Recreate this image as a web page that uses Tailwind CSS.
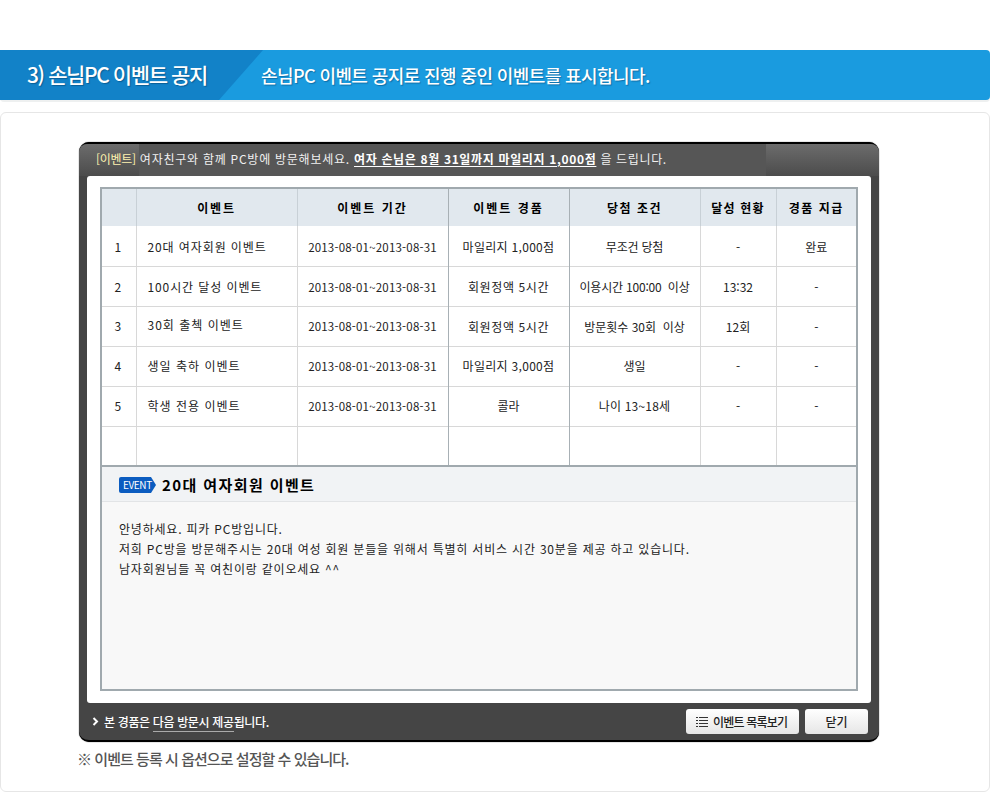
<!DOCTYPE html>
<html lang="ko">

<head>
    <meta charset="UTF-8">
    <title>손님PC 이벤트 공지</title>
    <script src="https://cdn.jsdelivr.net/npm/@tailwindcss/browser@4"></script>
</head>

<body class="bg-white font-['Noto_Sans_CJK_KR','Noto_Sans',sans-serif] antialiased">
    <div class="w-[990px] h-[792px] overflow-hidden pt-[50px]">

        <!-- Title bar -->
        <header class="h-[50px] flex items-center bg-[#1a9bdf] rounded-[4px] shadow-[0_2px_0_#eef0f0] text-white">
            <div class="w-[263px] h-full flex items-center pl-[27px] bg-[#1282c8] [clip-path:polygon(0_0,100%_0,219px_100%,0_100%)]">
                <h1 class="text-[21px] font-medium tracking-[-1.4px] [text-shadow:1px_1px_1px_#0a5f96]">3) 손님PC 이벤트 공지</h1>
            </div>
            <p class="ml-[-2px] text-[18px] font-medium tracking-[-0.6px] [text-shadow:1px_1px_1px_#0f6fa8]">손님PC 이벤트 공지로 진행 중인 이벤트를 표시합니다.</p>
        </header>

        <!-- Panel -->
        <section class="mt-[12px] h-[680px] border border-[#e6e6e6] rounded-[6px] pt-[29px] pl-[78px]">
            <div class="w-[800px] h-[600px] rounded-[10px] border-t-2 border-b-2 border-black bg-[#454545] flex flex-col shadow-[0_0_1px_#000]">

                <!-- Notice -->
                <div class="h-[32px] flex rounded-t-[8px] overflow-hidden bg-gradient-to-b from-[#6c6c6c] to-[#4c4c4c]">
                    <p class="w-[687px] pl-[17px] bg-[linear-gradient(to_right,transparent_60px,#565656_60px)] text-[12px] leading-[30px] text-[#f0f0f0] whitespace-pre"><span class="text-[#fff3b0] tracking-[-0.3px]">[이벤트]</span><span class="tracking-[0.75px]"> 여자친구와 함께 PC방에 방문해보세요. </span><b class="text-white underline underline-offset-2 tracking-[0.65px]">여자 손님은 8월 31일까지 마일리지 1,000점</b><span class="tracking-[0.65px]"> 을 드립니다.</span></p>
                </div>

                <!-- White frame -->
                <div class="mx-[8px] h-[527px] bg-white rounded-[3px] pt-[11px] px-[13px]">
                    <div class="h-[504px] border-2 border-[#a0a9ae] flex flex-col">
                        <table class="w-[754px] table-fixed border-collapse text-[12px] text-[#222] text-center">
                            <colgroup>
                                <col class="w-[34px]">
                                <col class="w-[161px]">
                                <col class="w-[151px]">
                                <col class="w-[121px]">
                                <col class="w-[131px]">
                                <col class="w-[76px]">
                                <col class="w-[80px]">
                            </colgroup>
                            <thead>
                                <tr class="h-[37px] bg-[#e1e8ee] font-bold text-black">
                                    <th class="border-r border-[#c8d0d6]"></th>
                                    <th class="border-r border-[#c8d0d6] tracking-[1.8px]">이벤트</th>
                                    <th class="border-r border-[#a8b0b5] tracking-[2px]">이벤트 기간</th>
                                    <th class="border-r border-[#a8b0b5] tracking-[2px]">이벤트 경품</th>
                                    <th class="border-r border-[#c8d0d6] tracking-[1.5px]">당첨 조건</th>
                                    <th class="border-r border-[#c8d0d6] tracking-[1.2px]">달성 현황</th>
                                    <th class="tracking-[1.5px]">경품 지급</th>
                                </tr>
                            </thead>
                            <tbody>
                                <tr class="h-[40px] border-b border-[#d8d8d8]">
                                    <td class="pt-[2px] border-r border-[#d8d8d8] pr-[2px]">1</td>
                                    <td class="pt-[2px] border-r border-[#d8d8d8] text-left pl-[11px] tracking-[0.9px]">20대 여자회원 이벤트</td>
                                    <td class="pt-[3px] border-r border-[#a8b0b5] text-[11.5px] tracking-[0.2px]">2013-08-01~2013-08-31</td>
                                    <td class="pt-[2px] border-r border-[#a8b0b5] tracking-[0.3px]">마일리지 1,000점</td>
                                    <td class="pt-[2px] border-r border-[#d8d8d8] tracking-[-0.2px]">무조건 당첨</td>
                                    <td class="pt-[2px] border-r border-[#d8d8d8]">-</td>
                                    <td class="pt-[2px]">완료</td>
                                </tr>
                                <tr class="h-[40px] border-b border-[#d8d8d8]">
                                    <td class="pt-[2px] border-r border-[#d8d8d8] pr-[2px]">2</td>
                                    <td class="pt-[2px] border-r border-[#d8d8d8] text-left pl-[11px] tracking-[0.9px]">100시간 달성 이벤트</td>
                                    <td class="pt-[3px] border-r border-[#a8b0b5] text-[11.5px] tracking-[0.2px]">2013-08-01~2013-08-31</td>
                                    <td class="pt-[2px] border-r border-[#a8b0b5] tracking-[0.6px]">회원정액 5시간</td>
                                    <td class="pt-[2px] border-r border-[#d8d8d8] tracking-[-0.2px] whitespace-pre">이용시간 100:00  이상</td>
                                    <td class="pt-[2px] border-r border-[#d8d8d8]">13:32</td>
                                    <td class="pt-[2px]">-</td>
                                </tr>
                                <tr class="h-[40px] border-b border-[#d8d8d8]">
                                    <td class="border-r border-[#d8d8d8] pr-[2px]">3</td>
                                    <td class="pb-[3px] border-r border-[#d8d8d8] text-left pl-[11px] tracking-[1px]">30회 출첵 이벤트</td>
                                    <td class="pt-[2px] border-r border-[#a8b0b5] text-[11.5px] tracking-[0.2px]">2013-08-01~2013-08-31</td>
                                    <td class="pt-px border-r border-[#a8b0b5] tracking-[0.6px]">회원정액 5시간</td>
                                    <td class="pt-px border-r border-[#d8d8d8] whitespace-pre">방문횟수 30회  이상</td>
                                    <td class="pt-px border-r border-[#d8d8d8]">12회</td>
                                    <td class="pt-px">-</td>
                                </tr>
                                <tr class="h-[40px] border-b border-[#d8d8d8]">
                                    <td class="border-r border-[#d8d8d8] pr-[2px]">4</td>
                                    <td class="border-r border-[#d8d8d8] text-left pl-[11px] tracking-[1px]">생일 축하 이벤트</td>
                                    <td class="pt-[2px] border-r border-[#a8b0b5] text-[11.5px] tracking-[0.2px]">2013-08-01~2013-08-31</td>
                                    <td class="border-r border-[#a8b0b5] tracking-[0.3px]">마일리지 3,000점</td>
                                    <td class="border-r border-[#d8d8d8]">생일</td>
                                    <td class="border-r border-[#d8d8d8]">-</td>
                                    <td>-</td>
                                </tr>
                                <tr class="h-[40px] border-b border-[#d8d8d8]">
                                    <td class="border-r border-[#d8d8d8] pr-[2px]">5</td>
                                    <td class="border-r border-[#d8d8d8] text-left pl-[11px] tracking-[1px]">학생 전용 이벤트</td>
                                    <td class="pt-[2px] border-r border-[#a8b0b5] text-[11.5px] tracking-[0.2px]">2013-08-01~2013-08-31</td>
                                    <td class="border-r border-[#a8b0b5]">콜라</td>
                                    <td class="border-r border-[#d8d8d8] tracking-[0.2px]">나이 13~18세</td>
                                    <td class="border-r border-[#d8d8d8]">-</td>
                                    <td>-</td>
                                </tr>
                                <tr class="h-[39px]">
                                    <td class="border-r border-[#d8d8d8]"></td>
                                    <td class="border-r border-[#d8d8d8]"></td>
                                    <td class="border-r border-[#a8b0b5]"></td>
                                    <td class="border-r border-[#a8b0b5]"></td>
                                    <td class="border-r border-[#d8d8d8]"></td>
                                    <td class="border-r border-[#d8d8d8]"></td>
                                    <td></td>
                                </tr>
                            </tbody>
                        </table>

                        <!-- Detail -->
                        <div class="flex-1 flex flex-col border-t-2 border-[#a0a9ae] bg-[#f8f8f8]">
                            <div class="h-[35px] flex items-center pl-[17px] pt-[2px] bg-[#f1f3f5] border-b border-[#e2e4e6]">
                                <svg class="w-[37px] h-[16px]" viewBox="0 0 37 16" xmlns="http://www.w3.org/2000/svg">
                                    <path fill="#0b5cc0" d="M2 0H32L37 8L32 16H2Q0 16 0 14V2Q0 0 2 0Z" />
                                </svg>
                                <span class="absolute ml-[4px] text-[10px] leading-[16px] tracking-[-0.4px] text-white">EVENT</span>
                                <h2 class="ml-[6px] text-[15px] font-bold text-black tracking-[1.4px]">20대 여자회원 이벤트</h2>
                            </div>
                            <div class="pt-[17px] pl-[17px] text-[12px] leading-[20px] tracking-[0.8px] text-[#222]">
                                <p>안녕하세요. 피카 PC방입니다.</p>
                                <p>저희 PC방을 방문해주시는 20대 여성 회원 분들을 위해서 특별히 서비스 시간 30분을 제공 하고 있습니다.</p>
                                <p>남자회원님들 꼭 여친이랑 같이오세요 ^^</p>
                            </div>
                        </div>
                    </div>
                </div>

                <!-- Footer -->
                <div class="flex-1 flex items-center pl-[13px] pr-[11px] text-[12px] text-white">
                    <svg class="w-[7px] h-[9px]" viewBox="0 0 7 9" xmlns="http://www.w3.org/2000/svg">
                        <path fill="none" stroke="#fff" stroke-width="2" d="M1.5 1L5 4.5L1.5 8" />
                    </svg>
                    <p class="ml-[5px] font-medium tracking-[-0.35px]">본 경품은 <span class="border-b border-[#aaa] pb-[1px]">다음 방문시 제공</span>됩니다.</p>
                    <button class="ml-auto w-[113px] h-[25px] flex items-center pl-[10px] gap-[5px] rounded-[3px] bg-gradient-to-b from-white to-[#e6e6e6] text-[#222] font-medium tracking-[-0.8px]">
                        <svg class="w-[12px] h-[10px]" viewBox="0 0 12 10" xmlns="http://www.w3.org/2000/svg">
                            <path stroke="#333" stroke-width="1" d="M0 .5H2M3 .5H12M0 3.5H2M3 3.5H12M0 6.5H2M3 6.5H12M0 9.5H2M3 9.5H12" />
                        </svg>
                        이벤트 목록보기
                    </button>
                    <button class="ml-[6px] w-[63px] h-[25px] rounded-[3px] bg-gradient-to-b from-white to-[#e6e6e6] text-[#222] font-medium">닫기</button>
                </div>
            </div>

            <p class="mt-[6px] -ml-[2px] text-[15px] font-medium tracking-[-0.95px] text-[#555]">※ 이벤트 등록 시 옵션으로 설정할 수 있습니다.</p>
        </section>
    </div>
</body>

</html>
